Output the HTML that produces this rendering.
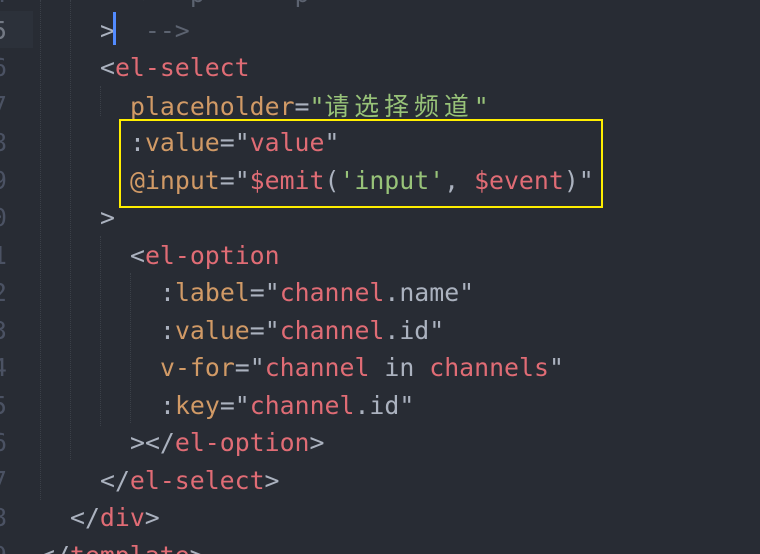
<!DOCTYPE html>
<html style="overflow:hidden;width:760px;height:554px"><head><meta charset="utf-8"><style>
body{margin:0;width:760px;height:554px;background:#282c34;overflow:hidden;position:relative;font-family:"DejaVu Sans Mono","Noto Sans CJK SC",monospace;font-size:24.85px}
.l{position:absolute;left:0;height:37.5px;line-height:37.5px;white-space:pre}
.n{position:absolute;left:-8px;color:#4b5263;line-height:37.5px;white-space:pre}
.t{color:#e06c75}.a{color:#d19a66}.s{color:#98c379}.p{color:#abb2bf}.c{color:#5c6370}
.g{position:absolute;width:0;border-left:1px dotted #3b4048}
.cj{letter-spacing:5px;font-family:"Noto Sans CJK SC",sans-serif}
</style></head><body>
<div style="position:absolute;left:0;top:11px;width:33px;height:37px;background:#2c313a"></div>
<div class="g" style="left:40px;top:0;height:500px"></div>
<div class="g" style="left:70px;top:0;height:460px"></div>
<div class="g" style="left:100px;top:86px;height:30px"></div>
<div class="g" style="left:100px;top:236px;height:190px"></div>
<div class="g" style="left:130px;top:273px;height:150px"></div>
<div class="n" style="top:-25px">4</div>
<div class="n" style="top:12px;color:#737984">5</div>
<div class="n" style="top:49px">6</div>
<div class="n" style="top:87px">7</div>
<div class="n" style="top:124px">8</div>
<div class="n" style="top:162px">9</div>
<div class="n" style="top:199px">0</div>
<div class="n" style="top:237px">1</div>
<div class="n" style="top:274px">2</div>
<div class="n" style="top:312px">3</div>
<div class="n" style="top:349px">4</div>
<div class="n" style="top:387px">5</div>
<div class="n" style="top:424px">6</div>
<div class="n" style="top:462px">7</div>
<div class="n" style="top:499px">8</div>
<div class="n" style="top:537px">9</div>
<div class="l c" style="left:130px;top:-25px">&lt;   p      p</div>
<div class="l c" style="left:100px;top:12px"><span class="p">&gt;</span>  --&gt;</div>
<div style="position:absolute;left:113px;top:12px;width:3px;height:33px;background:#528bff"></div>
<div class="l" style="left:100px;top:49px"><span class="p">&lt;</span><span class="t">el-select</span></div>
<div class="l" style="left:130px;top:87px"><span class="a">placeholder</span><span class="p">=</span><span class="s">"<span class="cj">请选择频道</span>"</span></div>
<div class="l" style="left:130px;top:124px"><span class="p">:</span><span class="a">value</span><span class="p">="</span><span class="t">value</span><span class="p">"</span></div>
<div class="l" style="left:130px;top:162px"><span class="a">@input</span><span class="p">="</span><span class="t">$emit</span><span class="p">(</span><span class="s">'input'</span><span class="p">, </span><span class="t">$event</span><span class="p">)"</span></div>
<div style="position:absolute;left:119px;top:119px;width:480px;height:85px;border:2px solid #ffee00"></div>
<div class="l p" style="left:100px;top:199px">&gt;</div>
<div class="l" style="left:130px;top:237px"><span class="p">&lt;</span><span class="t">el-option</span></div>
<div class="l" style="left:160px;top:274px"><span class="p">:</span><span class="a">label</span><span class="p">="</span><span class="t">channel</span><span class="p">.name"</span></div>
<div class="l" style="left:160px;top:312px"><span class="p">:</span><span class="a">value</span><span class="p">="</span><span class="t">channel</span><span class="p">.id"</span></div>
<div class="l" style="left:160px;top:349px"><span class="a">v-for</span><span class="p">="</span><span class="t">channel</span><span class="p"> in </span><span class="t">channels</span><span class="p">"</span></div>
<div class="l" style="left:160px;top:387px"><span class="p">:</span><span class="a">key</span><span class="p">="</span><span class="t">channel</span><span class="p">.id"</span></div>
<div class="l" style="left:130px;top:424px"><span class="p">&gt;&lt;/</span><span class="t">el-option</span><span class="p">&gt;</span></div>
<div class="l" style="left:100px;top:462px"><span class="p">&lt;/</span><span class="t">el-select</span><span class="p">&gt;</span></div>
<div class="l" style="left:70px;top:499px"><span class="p">&lt;/</span><span class="t">div</span><span class="p">&gt;</span></div>
<div class="l" style="left:40px;top:537px"><span class="p">&lt;/</span><span class="t">template</span><span class="p">&gt;</span></div>
</body></html>
